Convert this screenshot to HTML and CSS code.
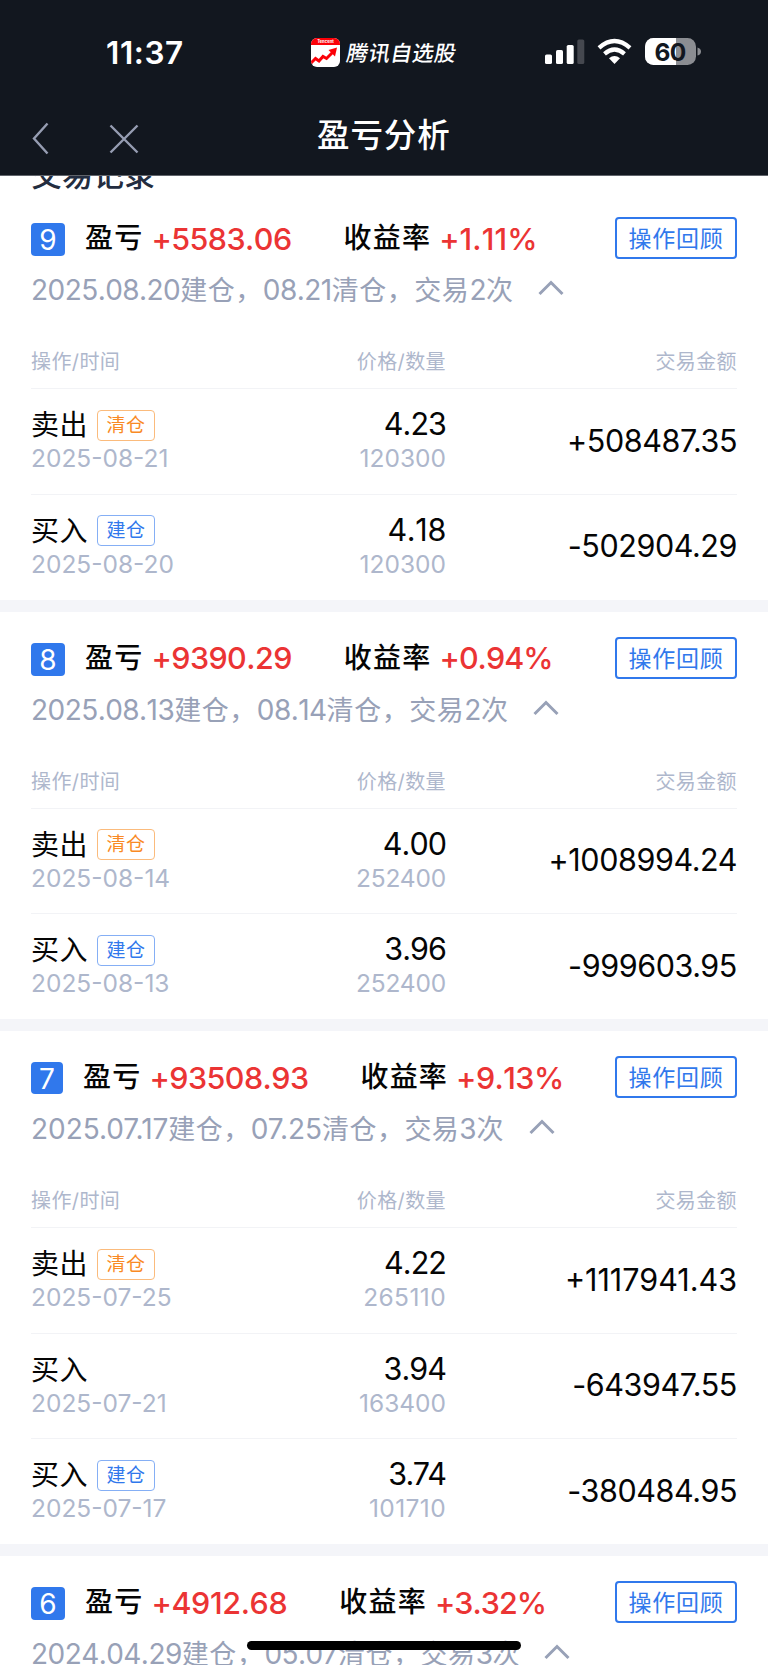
FILE: index.html
```html
<!DOCTYPE html>
<html lang="zh-CN">
<head>
<meta charset="utf-8">
<title>盈亏分析</title>
<link rel="stylesheet" href="styles.css">
</head>
<body>
<div class="screen">
  <header class="top">
    <div class="status">
      <div class="time">11:37</div>
      <div class="app">
        <svg class="app-logo" width="29" height="29" viewBox="0 0 29 29"><defs><clipPath id="r"><rect width="29" height="29" rx="6"/></clipPath></defs><g clip-path="url(#r)"><rect width="29" height="29" fill="#fff"/><rect width="29" height="7" fill="#fb0007"/><text x="14.5" y="5.2" text-anchor="middle" class="logo-text">Tencent</text><path d="M-.5 25.5L4.500 20.500L8 23L12 18.500L15.500 20.500L22 14" fill="none" stroke="#fb0007" stroke-width="3"/><path d="M17.500 12L26 9.500L24 18.500Z" fill="#fb0007"/></g></svg>
        <span class="app-name">腾讯自选股</span>
      </div>
      <svg class="status-icons" width="158" height="30" viewBox="0 0 158 30">
        <g fill="#fff"><rect x="1" y="16.500" width="7" height="9.500" rx="1.600"/><rect x="12" y="12" width="7" height="14" rx="1.600"/><rect x="22.700" y="7" width="7" height="19" rx="1.600"/></g>
        <rect x="33.300" y="1.500" width="7" height="24.500" rx="1.600" fill="#45484f"/>
        <path d="M70.500 26L65 20.300Q70.500 15.800 76 20.300Z" fill="#fff"/>
        <path d="M60.500 15.800Q70.500 7.400 80.500 15.800" fill="none" stroke="#fff" stroke-width="4.300"/>
        <path d="M55 9.900Q70.500 -3.800 86 9.900" fill="none" stroke="#fff" stroke-width="4.300"/>
        <defs><clipPath id="b"><rect x="101" y="0" width="51" height="27" rx="8.500"/></clipPath></defs>
        <g clip-path="url(#b)"><rect x="101" width="51" height="27" fill="#8b8d92"/><rect x="101" width="31" height="27" fill="#fff"/></g>
        <path d="M153.500 9.500Q157 10.500 157 13.500Q157 16.500 153.500 17.500Z" fill="#8b8d92"/>
        <text x="126" y="22.500" text-anchor="middle" class="battery">60</text>
      </svg>
    </div>
    <div class="nav">
      <svg class="nav-icons" width="110" height="34" viewBox="0 0 110 34" fill="none" stroke="#969db2" stroke-width="2.400"><path d="M15.500 2.500L2 17.500L15.500 32.500M78.500 4.500L105.500 31.500M105.500 4.500L78.500 31.500"/></svg>
      <h1 class="title">盈亏分析</h1>
    </div>
  </header>
  <main>
    <div class="clip"><h2 class="heading">交易记录</h2></div>

    <section class="card">
      <div class="summary"><span class="badge">9</span><span class="label">盈亏</span><span class="num">+5583.06</span><span class="label rate">收益率</span><span class="num pct ones">+1.11%</span><span class="review">操作回顾</span></div>
      <div class="sub"><span>2025.08.20<b>建仓，</b></span><span>08.21<b>清仓，</b></span><span><b>交易</b>2<b>次</b></span><svg class="chev" width="26" height="16" viewBox="0 0 26 16"><path d="M1.500 14L13 2.500L24.500 14"/></svg></div>
      <div class="cols"><span>操作/时间</span><span>价格/数量</span><span>交易金额</span></div>
      <div class="row"><div class="op"><div class="kind">卖出<span class="tag out">清仓</span></div><div class="date">2025-08-21</div></div><div class="price"><div class="p">4.23</div><div class="date">120300</div></div><div class="amount">+508487.35</div></div>
      <div class="row"><div class="op"><div class="kind">买入<span class="tag">建仓</span></div><div class="date">2025-08-20</div></div><div class="price"><div class="p ones">4.18</div><div class="date">120300</div></div><div class="amount">-502904.29</div></div>
    </section>

    <section class="card">
      <div class="summary"><span class="badge">8</span><span class="label">盈亏</span><span class="num">+9390.29</span><span class="label rate">收益率</span><span class="num pct">+0.94%</span><span class="review">操作回顾</span></div>
      <div class="sub"><span>2025.08.13<b>建仓，</b></span><span>08.14<b>清仓，</b></span><span><b>交易</b>2<b>次</b></span><svg class="chev" width="26" height="16" viewBox="0 0 26 16"><path d="M1.500 14L13 2.500L24.500 14"/></svg></div>
      <div class="cols"><span>操作/时间</span><span>价格/数量</span><span>交易金额</span></div>
      <div class="row"><div class="op"><div class="kind">卖出<span class="tag out">清仓</span></div><div class="date">2025-08-14</div></div><div class="price"><div class="p">4.00</div><div class="date round">252400</div></div><div class="amount">+1008994.24</div></div>
      <div class="row"><div class="op"><div class="kind">买入<span class="tag">建仓</span></div><div class="date">2025-08-13</div></div><div class="price"><div class="p">3.96</div><div class="date round">252400</div></div><div class="amount">-999603.95</div></div>
    </section>

    <section class="card">
      <div class="summary"><span class="badge seven">7</span><span class="label">盈亏</span><span class="num">+93508.93</span><span class="label rate">收益率</span><span class="num pct mid">+9.13%</span><span class="review">操作回顾</span></div>
      <div class="sub kern"><span>2025.07.17<b>建仓，</b></span><span>07.25<b>清仓，</b></span><span><b>交易</b>3<b>次</b></span><svg class="chev" width="26" height="16" viewBox="0 0 26 16"><path d="M1.500 14L13 2.500L24.500 14"/></svg></div>
      <div class="cols"><span>操作/时间</span><span>价格/数量</span><span>交易金额</span></div>
      <div class="row"><div class="op"><div class="kind">卖出<span class="tag out">清仓</span></div><div class="date">2025-07-25</div></div><div class="price"><div class="p">4.22</div><div class="date ones">265110</div></div><div class="amount ones">+1117941.43</div></div>
      <div class="row"><div class="op"><div class="kind">买入</div><div class="date">2025-07-21</div></div><div class="price"><div class="p">3.94</div><div class="date">163400</div></div><div class="amount">-643947.55</div></div>
      <div class="row"><div class="op"><div class="kind">买入<span class="tag">建仓</span></div><div class="date">2025-07-17</div></div><div class="price"><div class="p seventy">3.74</div><div class="date ones">101710</div></div><div class="amount">-380484.95</div></div>
    </section>

    <section class="card">
      <div class="summary"><span class="badge">6</span><span class="label">盈亏</span><span class="num four">+4912.68</span><span class="label rate">收益率</span><span class="num pct">+3.32%</span><span class="review">操作回顾</span></div>
      <div class="sub"><span>2024.04.29<b>建仓，</b></span><span>05.07<b>清仓，</b></span><span><b>交易</b>3<b>次</b></span><svg class="chev" width="26" height="16" viewBox="0 0 26 16"><path d="M1.500 14L13 2.500L24.500 14"/></svg></div>
    </section>
  </main>
  <div class="home"></div>
</div>
</body>
</html>
```
FILE: styles.css
```css
* { box-sizing: border-box; }
body { margin: 0; background: #fff; }
.screen {
  position: relative;
  width: 768px;
  height: 1665px;
  overflow: hidden;
  background: #fff;
  font-family: Inter, "Noto Sans CJK SC", sans-serif;
  color: #050505;
  white-space: nowrap;
}

.top {
  height: 175.5px;
  background: #12171f;
  border-bottom: 1px solid #60646b;
  color: #fff;
}
.status {
  height: 104px;
  display: grid;
  grid-template-columns: 311px 233px 1fr;
  align-items: start;
}
.time {
  padding: 33px 0 0 106px;
  font-size: 31.500px;
  line-height: 40px;
  font-weight: 600;
  letter-spacing: 0.600px;
}
.app { display: flex; gap: 7px; padding-top: 38px; }
.app-name {
  font-size: 21.500px;
  line-height: 30px;
  font-weight: 500;
  letter-spacing: 0.400px;
  transform: skewX(-10deg);
}
.logo-text { font: 700 4.200px Inter, sans-serif; fill: #fff; }
.status-icons { margin-top: 38px; }
.battery { font: 650 24.500px Inter, sans-serif; fill: #12171f; letter-spacing: -0.700px; }
.nav {
  display: grid;
  grid-template-columns: 317px 1fr;
  align-items: start;
}
.nav-icons { margin: 17px 0 0 32px; }
.title {
  margin: 9px 0 0;
  font-size: 32.500px;
  line-height: 46px;
  font-weight: 500;
  letter-spacing: 0.900px;
}

.clip { height: 16.500px; overflow: hidden; display: flex; align-items: flex-end; }
.heading {
  margin: 0 0 -6px 31px;
  font-size: 31px;
  line-height: 46px;
  font-weight: 500;
  color: #232d40;
}

.card { padding: 25px 31px 0.650px; border-bottom: 12px solid #f4f5f9; }
.summary { display: flex; align-items: center; height: 42px; }
.badge {
  width: 34px;
  height: 33px;
  margin: 3px 20px 0 0;
  border-radius: 4px;
  background: #3078ec;
  color: #fff;
  font-size: 28px;
  line-height: 34px;
  text-align: center;
}
.seven { width: 32px; height: 32px; margin-top: 2px; }
.label { font-size: 28px; line-height: 40px; font-weight: 500; letter-spacing: 1.200px; }
.num {
  margin-left: 8px;
  font-size: 30.500px;
  line-height: 39px;
  color: #eb3434;
  font-weight: 450;
  font-kerning: none;
  letter-spacing: -0.550px;
}
.num.four { letter-spacing: -0.350px; }
.num.pct { letter-spacing: -0.950px; }
.num.pct.mid { letter-spacing: -0.550px; }
.num.pct.ones { letter-spacing: 0.100px; }
.rate { margin-left: 52px; }
.review {
  width: 122px;
  height: 42px;
  margin-left: auto;
  border: 2px solid #3078ec;
  border-radius: 4px;
  color: #3078ec;
  font-size: 23px;
  line-height: 40px;
  letter-spacing: 0.800px;
  text-align: center;
}
.sub {
  display: flex;
  height: 40px;
  margin-top: 10px;
  font-size: 28px;
  line-height: 39px;
  color: #98a1b7;
  font-kerning: none;
  letter-spacing: -0.550px;
}
.sub.kern { font-kerning: normal; letter-spacing: -0.050px; }
.sub b {
  font-family: "Noto Sans CJK SC", sans-serif;
  font-weight: 400;
  font-size: 27px;
  letter-spacing: 0.550px;
}
.sub.kern b { letter-spacing: 0.450px; }
.chev { margin: 11px 0 0 24.500px; fill: none; stroke: #98a1b7; stroke-width: 3; }
.cols {
  display: grid;
  grid-template-columns: 200px 215px 1fr;
  height: 79px;
  padding-top: 38px;
  font-size: 20px;
  line-height: 30px;
  color: #aeb7cc;
  text-align: right;
  letter-spacing: 0.400px;
}
.cols span:first-child { text-align: left; }
.row {
  display: grid;
  grid-template-columns: 200px 215px 1fr;
  height: 105.500px;
  padding-top: 16px;
  border-top: 1px solid #f2f3f6;
}
.price { text-align: right; }
.kind {
  display: flex;
  align-items: center;
  height: 40px;
  font-size: 28px;
  line-height: 38px;
  letter-spacing: 0.500px;
}
.tag {
  width: 58px;
  height: 31px;
  margin-left: 9px;
  border: 1px solid #85aff5;
  border-radius: 4px;
  color: #3078ec;
  font-size: 19px;
  line-height: 29px;
  text-align: center;
}
.out { color: #f98a25; border-color: #fbbb7c; }
.p {
  height: 40px;
  font-size: 30.500px;
  line-height: 38px;
  font-kerning: none;
  letter-spacing: -0.950px;
}
.p.ones { letter-spacing: -0.300px; }
.p.seventy { font-kerning: normal; letter-spacing: -1px; }
.date { font-size: 24.500px; line-height: 27px; color: #aeb7cc; }
.date.round { letter-spacing: -0.200px; }
.date.ones { letter-spacing: 0.400px; }
.amount {
  padding-top: 15.500px;
  font-size: 30.500px;
  line-height: 39px;
  text-align: right;
  letter-spacing: -0.420px;
}
.amount.ones { letter-spacing: 0; }

.home {
  position: absolute;
  left: 247px;
  top: 1641px;
  width: 274px;
  height: 9px;
  border-radius: 5px;
  background: #000;
}
```
